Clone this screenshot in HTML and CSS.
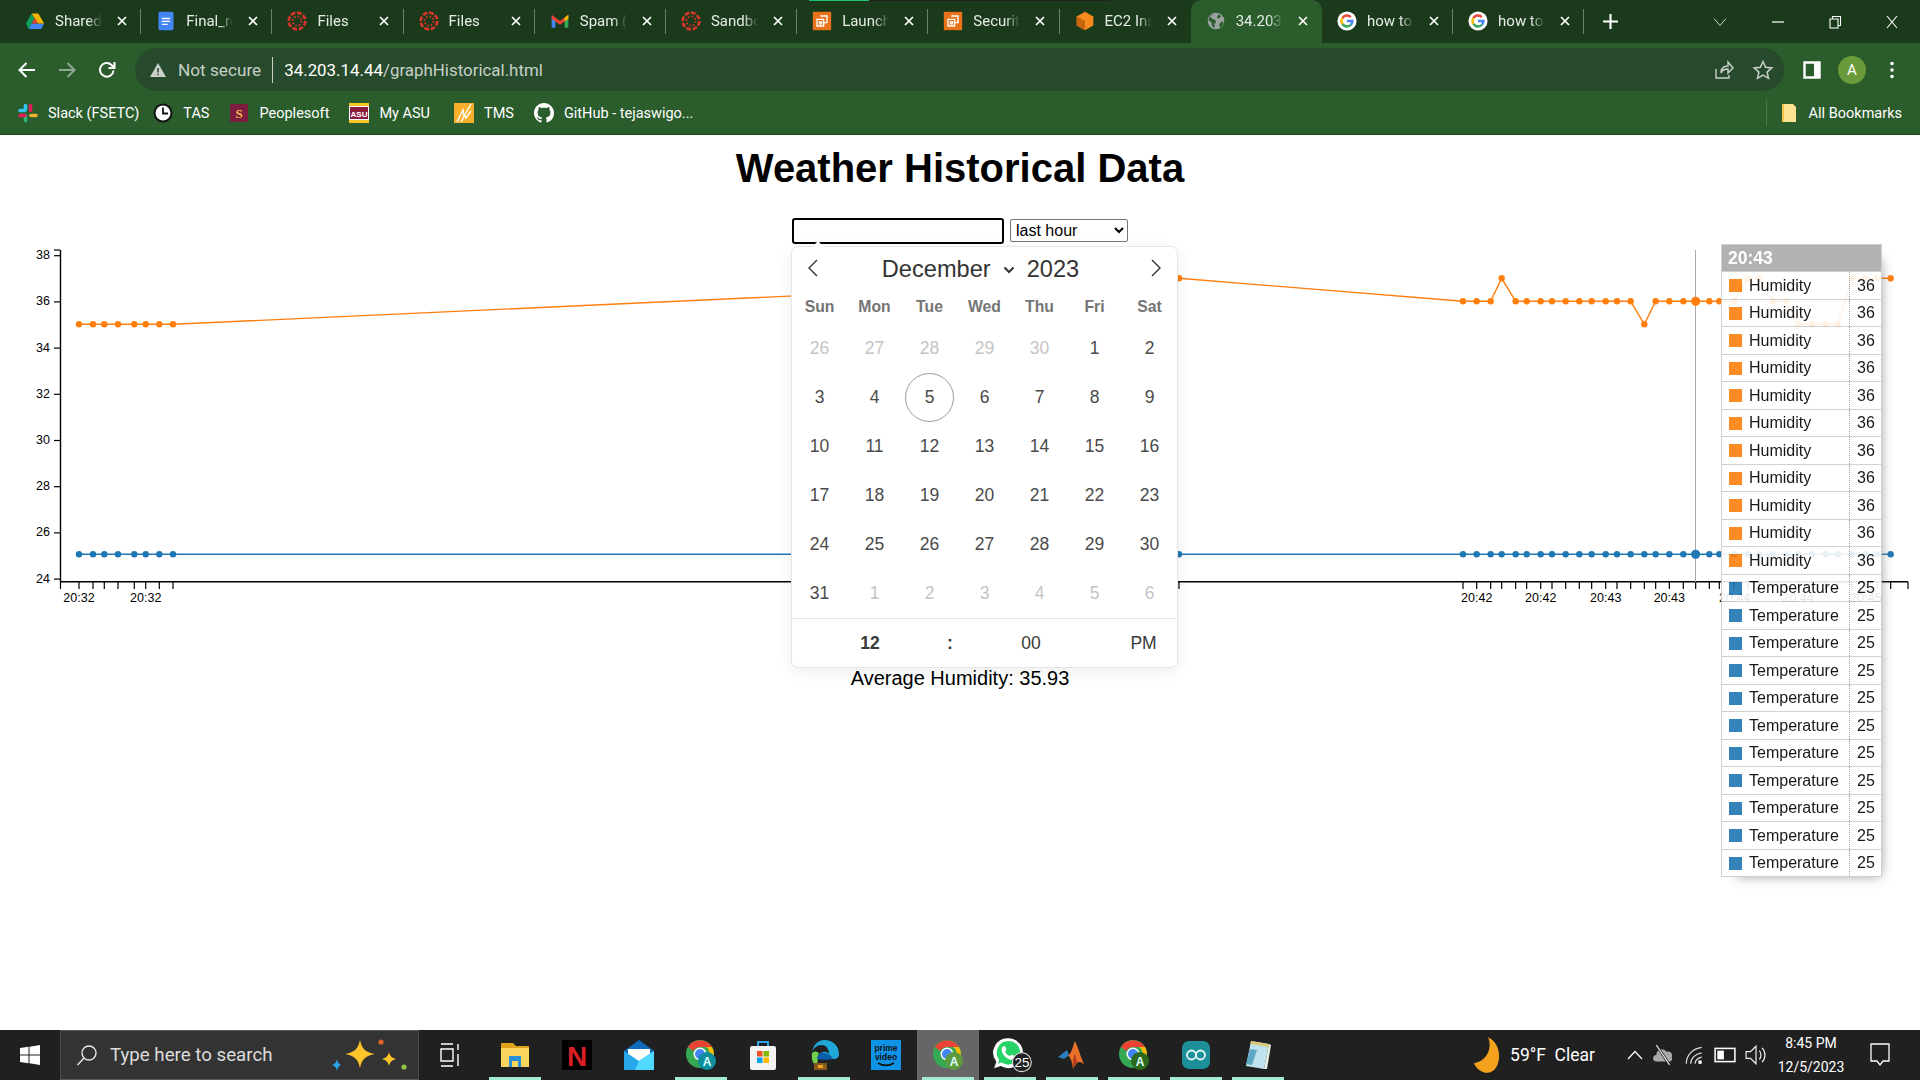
FILE: index.html
```html
<!DOCTYPE html>
<html lang="en">
<head>
  <meta charset="UTF-8">
  <title>Weather Historical Data</title>
  <link rel="stylesheet" href="styles.css">
</head>
<body>

  <svg class="sprite">
    <symbol id="i-drive" viewBox="0 0 24 24">
      <path fill="#0f9d58" d="M8 3 1 15l3.500 6.500L11.500 9z"/>
      <path fill="#4285f4" d="M4.500 21.500h15L23 15H8z"/>
      <path fill="#f4b400" d="M8 3h8l7 12h-7.500z"/>
      <path fill="#db4437" d="M8 15h7.500l-3.700-6.500z"/>
    </symbol>
    <symbol id="i-docs" viewBox="0 0 24 24">
      <rect x="3" y="1" width="18" height="22" rx="2" fill="#4285f4"/>
      <path d="M7 9h10M7 12.500h10M7 16h7" stroke="#fff" stroke-width="1.600"/>
    </symbol>
    <symbol id="i-canvas" viewBox="0 0 24 24">
      <circle cx="12" cy="12" r="10" fill="none" stroke="#d8352a" stroke-width="3.200" stroke-dasharray="5.800 2"/>
      <circle cx="12" cy="12" r="5.500" fill="none" stroke="#d8352a" stroke-width="2.200" stroke-dasharray="2 2.300"/>
    </symbol>
    <symbol id="i-gmail" viewBox="0 0 24 24">
      <path fill="#4285f4" d="M2 6v14h4.500V9.500z"/>
      <path fill="#34a853" d="M22 6v14h-4.500V9.500z"/>
      <path fill="#ea4335" d="M2 4.500 12 12l10-7.500v4.800L12 16.500 2 9.300z"/>
      <path fill="#fbbc04" d="M17.500 8 22 4.500v4.800l-4.500 3.400z"/>
    </symbol>
    <symbol id="i-aws" viewBox="0 0 24 24">
      <rect x="1" y="1" width="22" height="22" fill="#e8731a"/>
      <path d="M10 6h8v8h-4M6 10h8v8H6zM9 13h2.500v2.500H9z" fill="none" stroke="#fff" stroke-width="1.600"/>
    </symbol>
    <symbol id="i-ec2" viewBox="0 0 24 24">
      <path fill="#f58a1f" d="M12 1 22 6.500v11L12 23 2 17.500v-11z"/>
      <path fill="#c9650f" d="M12 23V12L2 6.500v11z"/>
    </symbol>
    <symbol id="i-globe" viewBox="0 0 24 24">
      <circle cx="12" cy="12" r="10" fill="#9aa3a0"/>
      <path fill="#2a5c2c" d="M9 3 5 7l3 3 3 .5 1 3-2 2 .5 5-3-2-1-5L3 11C4 7 6 4 9 3zM15 4l3 2-2 3-3-1zM20 12l1 3-3 5-2-1 .5-4z"/>
    </symbol>
    <symbol id="i-google" viewBox="0 0 24 24">
      <circle cx="12" cy="12" r="11.500" fill="#fff"/>
      <path fill="none" stroke="#ea4335" stroke-width="3" d="M6.500 8.500A6.500 6.500 0 0 1 16.500 7.300"/>
      <path fill="none" stroke="#fbbc04" stroke-width="3" d="M6.500 8.500a6.500 6.500 0 0 0 0 7"/>
      <path fill="none" stroke="#34a853" stroke-width="3" d="M6.500 15.500a6.500 6.500 0 0 0 10.200 1"/>
      <path fill="none" stroke="#4285f4" stroke-width="3" d="M16.700 16.500a6.500 6.500 0 0 0 1.800-4.500H12"/>
    </symbol>
    <symbol id="i-close" viewBox="0 0 12 12">
      <path d="M2 2l8 8M10 2l-8 8" stroke="#fff" stroke-width="1.700" fill="none"/>
    </symbol>
    <symbol id="i-chrome" viewBox="0 0 32 32">
      <circle cx="15" cy="15" r="14" fill="#34a853"/>
      <path fill="#ea4335" d="M3 8a14 14 0 0 1 24 0H15a7 7 0 0 0-6.500 4z"/>
      <path fill="#fbbc04" d="M27 8a14 14 0 0 1-10 20.800L21 20a7 7 0 0 0 0-12z"/>
      <circle cx="15" cy="15" r="6.500" fill="#fff"/>
      <circle cx="15" cy="15" r="5" fill="#4285f4"/>
    </symbol>
  </svg>

  <header class="browser">
    <div class="tabstrip">
      <div class="tab"><svg class="tab-icon"><use href="#i-drive"/></svg><span class="tab-title">Shared drives</span><svg class="tab-x"><use href="#i-close"/></svg></div>
      <div class="tab"><svg class="tab-icon"><use href="#i-docs"/></svg><span class="tab-title">Final_report</span><svg class="tab-x"><use href="#i-close"/></svg></div>
      <div class="tab"><svg class="tab-icon"><use href="#i-canvas"/></svg><span class="tab-title">Files</span><svg class="tab-x"><use href="#i-close"/></svg></div>
      <div class="tab"><svg class="tab-icon"><use href="#i-canvas"/></svg><span class="tab-title">Files</span><svg class="tab-x"><use href="#i-close"/></svg></div>
      <div class="tab"><svg class="tab-icon"><use href="#i-gmail"/></svg><span class="tab-title">Spam (12)</span><svg class="tab-x"><use href="#i-close"/></svg></div>
      <div class="tab"><svg class="tab-icon"><use href="#i-canvas"/></svg><span class="tab-title">Sandbox</span><svg class="tab-x"><use href="#i-close"/></svg></div>
      <div class="tab"><svg class="tab-icon"><use href="#i-aws"/></svg><span class="tab-title">Launch an</span><svg class="tab-x"><use href="#i-close"/></svg></div>
      <div class="tab"><svg class="tab-icon"><use href="#i-aws"/></svg><span class="tab-title">SecurityGroups</span><svg class="tab-x"><use href="#i-close"/></svg></div>
      <div class="tab no-sep"><svg class="tab-icon"><use href="#i-ec2"/></svg><span class="tab-title">EC2 Instance</span><svg class="tab-x"><use href="#i-close"/></svg></div>
      <div class="tab active"><svg class="tab-icon"><use href="#i-globe"/></svg><span class="tab-title">34.203.14.44</span><svg class="tab-x"><use href="#i-close"/></svg></div>
      <div class="tab"><svg class="tab-icon"><use href="#i-google"/></svg><span class="tab-title">how to add</span><svg class="tab-x"><use href="#i-close"/></svg></div>
      <div class="tab"><svg class="tab-icon"><use href="#i-google"/></svg><span class="tab-title">how to add</span><svg class="tab-x"><use href="#i-close"/></svg></div>
      <svg class="new-tab" viewBox="0 0 16 16"><path d="M8 1v14M1 8h14" stroke="#fff" stroke-width="2"/></svg>
      <div class="win-btns">
        <svg class="win-chevron" viewBox="0 0 14 10"><path d="M1 1.500 7 8.500l6-7" fill="none" stroke="#c6d2c6" stroke-width="1"/></svg>
        <div class="win-btn"><svg viewBox="0 0 14 14"><path d="M1 7h12" stroke="#fff" stroke-width="1.200"/></svg></div>
        <div class="win-btn"><svg viewBox="0 0 14 14"><path d="M2 4h8v9H2zM4.500 4V1.500H12.500V10.500H10" fill="none" stroke="#fff" stroke-width="1.100"/></svg></div>
        <div class="win-btn"><svg viewBox="0 0 14 14"><path d="M2 1l10 12M12 1 2 13" stroke="#fff" stroke-width="1.100"/></svg></div>
      </div>
    </div>

    <div class="toolbar">
      <div class="nav-btn"><svg viewBox="0 0 20 20"><path d="M18 10H3M9.500 3 2.500 10l7 7" fill="none" stroke="#fff" stroke-width="2"/></svg></div>
      <div class="nav-btn"><svg viewBox="0 0 20 20"><path d="M2 10h15M10.500 3l7 7-7 7" fill="none" stroke="#8fa892" stroke-width="2"/></svg></div>
      <div class="nav-btn"><svg viewBox="0 0 20 20"><path d="M16.500 10.500A6.800 6.800 0 1 1 14.500 5L17 7.500M17.500 2v6h-6" fill="none" stroke="#fff" stroke-width="2"/></svg></div>
      <div class="omnibox">
        <svg class="warn-icon" viewBox="0 0 18 18"><path d="M9 2 17 16H1z" fill="#c9d1ca"/><path d="M9 7v4.500M9 12.800v1.400" stroke="#274a2c" stroke-width="1.500"/></svg>
        <span class="not-secure">Not secure</span>
        <span class="omni-sep"></span>
        <span class="url"><b>34.203.14.44</b>/graphHistorical.html</span>
        <div class="omni-actions">
          <svg viewBox="0 0 22 22"><path d="M4 10v9h13v-3M9 14c0-5 3-7 7-7V3l5 6-5 5v-4c-3 0-6 1-7 4z" fill="none" stroke="#c9d1ca" stroke-width="1.400"/></svg>
          <svg viewBox="0 0 22 22"><path d="M11 2.500l2.600 5.800 6.200.6-4.700 4.200 1.400 6.200L11 16.100l-5.500 3.200 1.400-6.200L2.200 8.900l6.200-.6z" fill="none" stroke="#c9d1ca" stroke-width="1.500"/></svg>
        </div>
      </div>
      <div class="nav-btn panel-btn"><svg viewBox="0 0 20 20"><path d="M2.500 2.500h15v15h-15z" fill="none" stroke="#fff" stroke-width="2.400"/><path d="M12 3h5v14h-5z" fill="#fff"/></svg></div>
      <div class="nav-btn"><span class="avatar">A</span></div>
      <div class="nav-btn"><svg viewBox="0 0 20 20"><circle cx="10" cy="3.500" r="1.800" fill="#fff"/><circle cx="10" cy="10" r="1.800" fill="#fff"/><circle cx="10" cy="16.500" r="1.800" fill="#fff"/></svg></div>
    </div>

    <div class="bookmarks">
      <div class="bm bm-slack">
        <svg viewBox="0 0 20 20">
          <path d="M2 7.500h5" stroke="#36c5f0" stroke-width="3.600" stroke-linecap="round"/>
          <path d="M12.500 2.500v5" stroke="#e01e5a" stroke-width="3.600" stroke-linecap="round"/>
          <path d="M13 12.500h5" stroke="#ecb22e" stroke-width="3.600" stroke-linecap="round"/>
          <path d="M7.500 12.500v5" stroke="#2eb67d" stroke-width="3.600" stroke-linecap="round"/>
          <path d="M2 12.500h5" stroke="#e01e5a" stroke-width="3.600" stroke-linecap="round"/>
          <path d="M7.500 2.500v3" stroke="#36c5f0" stroke-width="3.600" stroke-linecap="round"/>
        </svg>
        <span>Slack (FSETC)</span>
      </div>
      <div class="bm">
        <svg viewBox="0 0 20 20"><circle cx="10" cy="10" r="8.500" fill="#fff" stroke="#111" stroke-width="2"/><path d="M10 4.500V10.500H15" fill="none" stroke="#111" stroke-width="1.800"/></svg>
        <span>TAS</span>
      </div>
      <div class="bm">
        <svg viewBox="0 0 20 20"><rect x="1" y="1" width="18" height="18" fill="#7c1d3f"/><text x="10" y="15" class="bm-mark">S</text></svg>
        <span>Peoplesoft</span>
      </div>
      <div class="bm bm-myasu">
        <svg viewBox="0 0 20 20"><rect x="0" y="0" width="20" height="20" fill="#fff"/><rect x="0" y="0" width="20" height="3" fill="#ffc627"/><rect x="0" y="17" width="20" height="3" fill="#ffc627"/><rect x="1" y="4" width="18" height="12" fill="#8c1d40"/><text x="10" y="14" class="bm-asu">ASU</text></svg>
        <span>My ASU</span>
      </div>
      <div class="bm">
        <svg viewBox="0 0 20 20"><rect x="0" y="0" width="20" height="20" fill="#f6b02c"/><path d="M3 19 9 7l1 6L17 1M7 19l4-7 1 3 5-7" fill="none" stroke="#fff" stroke-width="1.400"/></svg>
        <span>TMS</span>
      </div>
      <div class="bm">
        <svg viewBox="0 0 16 16"><path fill="#fff" d="M8 0C3.580 0 0 3.580 0 8c0 3.540 2.290 6.530 5.470 7.590.4.070.55-.17.55-.38 0-.19-.01-.82-.01-1.490-2.010.37-2.530-.49-2.690-.94-.09-.23-.48-.94-.82-1.130-.28-.15-.68-.52-.01-.53.63-.01 1.080.58 1.230.82.72 1.210 1.870.87 2.330.66.07-.52.28-.87.51-1.070-1.780-.2-3.640-.89-3.640-3.950 0-.87.31-1.590.82-2.150-.08-.2-.36-1.020.08-2.120 0 0 .67-.21 2.200.82.64-.18 1.320-.27 2-.27.68 0 1.360.09 2 .27 1.530-1.040 2.200-.82 2.200-.82.44 1.100.16 1.920.08 2.120.51.56.82 1.270.82 2.150 0 3.070-1.870 3.750-3.650 3.950.29.25.54.73.54 1.480 0 1.070-.01 1.930-.01 2.200 0 .21.15.46.55.38A8.013 8.013 0 0016 8c0-4.420-3.580-8-8-8z"/></svg>
        <span>GitHub - tejaswigo...</span>
      </div>
      <div class="bm all-bm">
        <svg viewBox="0 0 20 20"><path d="M3 1h11l3 3v15H3z" fill="#fde293"/><path d="M3 1h2v18H3z" fill="#f0c649"/></svg>
        <span>All Bookmarks</span>
      </div>
    </div>
  </header>

  <main class="page">
    <h1>Weather Historical Data</h1>

    <div class="controls">
      <input type="text" class="date-input">
      <select class="range">
        <option>last hour</option>
      </select>
    </div>

    <svg id="chart" class="chart" viewBox="0 248 1920 360"></svg>

    <p class="average">Average Humidity: 35.93</p>

    <div class="calendar">
      <div class="cal-head">
        <svg class="cal-arrow" viewBox="0 0 12 20"><path d="M10 2 2 10l8 8" fill="none" stroke="#333" stroke-width="1.400"/></svg>
        <div class="cal-month">
          <span>December</span>
          <svg class="cal-chevron" viewBox="0 0 12 8"><path d="M1.500 1.500 6 6l4.500-4.500" fill="none" stroke="#333" stroke-width="2"/></svg>
          <span>2023</span>
        </div>
        <svg class="cal-arrow" viewBox="0 0 12 20"><path d="M2 2l8 8-8 8" fill="none" stroke="#333" stroke-width="1.400"/></svg>
      </div>
      <div class="cal-weekdays">
        <span>Sun</span><span>Mon</span><span>Tue</span><span>Wed</span><span>Thu</span><span>Fri</span><span>Sat</span>
      </div>
      <div class="cal-days">
        <span class="other">26</span><span class="other">27</span><span class="other">28</span><span class="other">29</span><span class="other">30</span><span>1</span><span>2</span>
        <span>3</span><span>4</span><span class="today">5</span><span>6</span><span>7</span><span>8</span><span>9</span>
        <span>10</span><span>11</span><span>12</span><span>13</span><span>14</span><span>15</span><span>16</span>
        <span>17</span><span>18</span><span>19</span><span>20</span><span>21</span><span>22</span><span>23</span>
        <span>24</span><span>25</span><span>26</span><span>27</span><span>28</span><span>29</span><span>30</span>
        <span>31</span><span class="other">1</span><span class="other">2</span><span class="other">3</span><span class="other">4</span><span class="other">5</span><span class="other">6</span>
      </div>
      <div class="cal-time">
        <b>12</b><b>:</b><span>00</span><span>PM</span>
      </div>
    </div>

    <div id="tooltip" class="tooltip">
      <div class="tip-head">20:43</div>
    </div>
  </main>

  <footer class="taskbar">
    <div class="start">
      <svg viewBox="0 0 20 20"><path fill="#fff" d="M0 3l8.500-1.200V9.500H0zM9.500 1.700 20 0v9.500H9.500zM0 10.500h8.500v7.700L0 17zM9.500 10.500H20V20L9.500 18.300z"/></svg>
    </div>
    <div class="search">
      <svg class="search-icon" viewBox="0 0 22 22"><circle cx="13" cy="9" r="7" fill="none" stroke="#e6e6e6" stroke-width="1.400"/><path d="M8 14 1.500 21" stroke="#e6e6e6" stroke-width="1.400"/></svg>
      <span>Type here to search</span>
      <svg class="sparkles" viewBox="0 0 78 50">
        <path fill="#fdc42c" d="M30 10c2 9 5 12 15 14-10 2-13 5-15 14-2-9-5-12-15-14 10-2 13-5 15-14z"/>
        <path fill="#fdc42c" d="M59 22c1 4 3 6 7 7-4 1-6 3-7 7-1-4-3-6-7-7 4-1 6-3 7-7z"/>
        <path fill="#2aa6e8" d="M7 29c.5 3 1.500 5 4 6-2.500 1-3.500 3-4 6-.5-3-1.500-5-5-6 3.500-1 4.500-3 5-6z"/>
        <circle cx="51" cy="12" r="2.600" fill="#e2622c"/>
        <circle cx="74" cy="37" r="2.600" fill="#8dc63f"/>
      </svg>
    </div>
    <div class="task-view">
      <svg viewBox="0 0 20 24"><path d="M1 1h12M1 6h12v12H1zM1 23h12M18 1v6M18 11v12" fill="none" stroke="#fff" stroke-width="1.400"/></svg>
    </div>
    <div class="apps">
      <div class="app open">
        <svg viewBox="0 0 32 32"><path fill="#e0a21b" d="M2 4h12l3 3h13v6H2z"/><path fill="#fbd65c" d="M2 9h28v19H2z"/><path fill="#2a8fd8" d="M10 17h12v11h-3v-6h-6v6h-3z"/></svg>
      </div>
      <div class="app">
        <svg viewBox="0 0 32 32"><rect x="1" y="1" width="30" height="30" fill="#000"/><text x="16" y="27" class="netflix">N</text></svg>
      </div>
      <div class="app">
        <svg viewBox="0 0 32 32"><path fill="#0f6cbd" d="M16 1 31 12v18H1V12z"/><path fill="#fff" d="M5 10h22v6l-11 7-11-7z"/><path fill="#28a8ea" d="M1 12l15 10 15-10v19H1z"/><path fill="#50d9ff" d="M16 22l15-10v19H12z"/></svg>
      </div>
      <div class="app open">
        <svg viewBox="0 0 32 32"><use href="#i-chrome"/><circle cx="22" cy="22" r="9" fill="#0e8fa0"/><text x="22" y="26.500" class="prof">A</text></svg>
      </div>
      <div class="app">
        <svg viewBox="0 0 32 32"><path d="M11 8V3h10v5" fill="none" stroke="#2aa6e8" stroke-width="2"/><rect x="3" y="7" width="26" height="24" rx="2" fill="#f3f3f3"/><rect x="10" y="12" width="5.500" height="5.500" fill="#f25022"/><rect x="16.500" y="12" width="5.500" height="5.500" fill="#7fba00"/><rect x="10" y="18.500" width="5.500" height="5.500" fill="#00a4ef"/><rect x="16.500" y="18.500" width="5.500" height="5.500" fill="#ffb900"/></svg>
      </div>
      <div class="app open">
        <svg viewBox="0 0 32 32"><path fill="#1fa8d8" d="M16 1c9 0 15 6 15 14 0 3-2 5-6 5H9c2-8 9-9 12-5 0-5-3-9-7-9-5 0-9 3-10 8C5 6 10 1 16 1z"/><path fill="#6fd14a" d="M4 14c-1 6 1 11 5 14l1-9c0-2 0-3 1-5-3-2-5-2-7 0z"/><path fill="#0a5da8" d="M9 20c0-4 4-7 8-6 5 1 7 4 8 6-4 1-12 1-16 0z"/><rect x="6" y="24" width="13" height="7" fill="#8a5a1c"/><rect x="10" y="26" width="5" height="3" fill="#f5a623"/></svg>
      </div>
      <div class="app">
        <svg viewBox="0 0 32 32"><rect x="1" y="1" width="30" height="30" fill="#0f93e6"/><text x="16" y="12" class="prime">prime</text><text x="16" y="21" class="prime">video</text><path d="M8 24c5 3 11 3 16 0" fill="none" stroke="#111" stroke-width="1.800"/></svg>
      </div>
      <div class="app open current">
        <svg viewBox="0 0 32 32"><use href="#i-chrome"/><circle cx="22" cy="22" r="9" fill="#5c9a3c"/><text x="22" y="26.500" class="prof">A</text></svg>
      </div>
      <div class="app open">
        <svg class="wide" viewBox="0 0 36 32"><path fill="#fff" d="M14 1a13 13 0 0 1 12 18A13 13 0 0 1 7 26l-6 2 2-6A13 13 0 0 1 14 1z"/><path fill="#25d366" d="M14 3.500a10.500 10.500 0 0 1 0 21c-2 0-4-.5-6-1.800l-3.500 1 1-3.400A10.500 10.500 0 0 1 14 3.500z"/><path fill="#fff" d="M10 8c1 0 2 2.500 2 3 0 1-1 1.500-1 2 .8 2 2.200 3 4 4 .5 0 1-1.200 1.800-1.200s3 1.200 3 2c0 2-2.500 2.800-4 2.500-4-1-8-5-8-9 0-1.500 1-3.300 2.200-3.300z"/><circle cx="26" cy="22.500" r="8.500" fill="#222" stroke="#ddd" stroke-width="1"/><text x="26" y="27" class="wa-count">25</text></svg>
      </div>
      <div class="app open">
        <svg viewBox="0 0 32 32"><path fill="#e9702a" d="M19 2c3 6 6 17 9 23-3-2-5-3-7-1-1 1-3 4-4 6-1-8-2-10-5-14 3 0 5-9 7-14z"/><path fill="#2a7fbc" d="M2 18l9-7c1 2 2 4 1 6l-4 3z"/><path fill="#b83a1a" d="M17 30c0-7 0-12 2-16l2 10c-2 1-3 3-4 6z"/></svg>
      </div>
      <div class="app open">
        <svg viewBox="0 0 32 32"><use href="#i-chrome"/><circle cx="22" cy="22" r="9" fill="#2c6a1e"/><text x="22" y="26.500" class="prof">A</text></svg>
      </div>
      <div class="app open">
        <svg viewBox="0 0 32 32"><rect x="2" y="2" width="28" height="28" rx="7" fill="#1d8f98"/><circle cx="11.500" cy="16" r="4.500" fill="none" stroke="#e6f7f7" stroke-width="1.800"/><circle cx="20.500" cy="16" r="4.500" fill="none" stroke="#e6f7f7" stroke-width="1.800"/></svg>
      </div>
      <div class="app open">
        <svg viewBox="0 0 32 32"><path fill="#bfe3ec" d="M9 2l18 3-5 25L4 27z"/><path fill="#5fa8c4" d="M8 10l7 1-5 15-6-1z"/><path fill="#e8f1e4" d="M22 30l5-25 2 1-4 24z"/><path fill="#d9c77a" d="M9 2l18 3-.6 3L8.300 5z"/></svg>
      </div>
    </div>
    <div class="tray">
      <svg class="moon" viewBox="0 0 30 40"><path fill="#f4a11e" d="M17 1c4 7 3 24-15 28 3 6 9 10 14 10 8 0 13-8 13-18S24 4 17 1z"/></svg>
      <span class="weather">59°F&nbsp; Clear</span>
      <svg class="tray-chev" viewBox="0 0 16 10"><path d="M1 9l7-7.500L15 9" fill="none" stroke="#fff" stroke-width="1.200"/></svg>
      <svg class="tray-icon" viewBox="0 0 20 20"><path fill="#a9a9a9" d="M4 16c-4 0-4-6 0-6 0-5 6-7 9-3 4-1 6 2 5 5 1 3-1 4-3 4z"/><path d="M4 1l12 18" stroke="#222" stroke-width="2.400"/><path d="M4 1l12 18" stroke="#eee" stroke-width="1"/></svg>
      <svg class="tray-icon" viewBox="0 0 20 20"><path d="M3 18C3 10 9 4 17 3M7 18c0-5 4-9 10-10M11 18c0-3 2-5 6-6" fill="none" stroke="#ddd" stroke-width="1.100"/><rect x="14" y="15" width="3" height="3" fill="#fff"/></svg>
      <svg class="tray-icon" viewBox="0 0 20 20"><rect x="1" y="4" width="18" height="12" fill="none" stroke="#fff" stroke-width="1.400"/><rect x="3" y="6" width="6" height="8" fill="#fff"/></svg>
      <svg class="tray-icon" viewBox="0 0 20 20"><path d="M1 7h4l5-5v16l-5-5H1zM13 6c2 2 2 6 0 8M15.500 3.500c3.500 3.500 3.500 9.500 0 13" fill="none" stroke="#eee" stroke-width="1.100"/></svg>
      <div class="clock"><span>8:45 PM</span><span>12/5/2023</span></div>
      <svg class="notif" viewBox="0 0 20 24"><path d="M1 1h18v17h-6l-3 4-3-4H1z" fill="none" stroke="#fff" stroke-width="1.300"/></svg>
    </div>
  </footer>

  <script src="chart.js"></script>
</body>
</html>
```

FILE: styles.css
```css
* {
  box-sizing: border-box;
}

body {
  margin: 0;
  height: 1080px;
  overflow: hidden;
  display: flex;
  flex-direction: column;
  background: #fff;
  font-family: "Liberation Sans", Arial, sans-serif;
}

.sprite {
  display: none;
}

/* browser chrome */

.browser {
  font-family: Roboto, "Noto Sans", sans-serif;
  color: #fff;
}

.tabstrip {
  position: relative;
  height: 43px;
  background: #1b3a1c;
  display: flex;
  align-items: center;
  padding-left: 10px;
}

/* sliver of the window behind, along the top edge */
.tabstrip::before {
  content: "";
  position: absolute;
  left: 809px;
  top: 0;
  width: 301px;
  height: 1px;
  background: linear-gradient(90deg, #1bc46b 60px, #222 60px);
}

.tab {
  position: relative;
  width: 131.200px;
  height: 43px;
  flex: none;
  display: flex;
  align-items: center;
  padding: 0 0 1px 15px;
  font-size: 15px;
  color: #e6ece6;
}

.tab::after {
  content: "";
  position: absolute;
  right: 0;
  top: 9px;
  height: 25px;
  width: 1px;
  background: #6a806b;
}

.tab.no-sep::after,
.tab.active::after {
  display: none;
}

.tab.active {
  background: #2a5c2c;
  border-radius: 10px 10px 0 0;
}

.tab-icon {
  width: 20px;
  height: 20px;
  flex: none;
}

.tab-title {
  width: 47px;
  margin-left: 10px;
  white-space: nowrap;
  overflow: hidden;
  -webkit-mask-image: linear-gradient(90deg, #000 70%, transparent);
  mask-image: linear-gradient(90deg, #000 70%, transparent);
}

.tab-x {
  width: 12px;
  height: 12px;
  margin-left: 14px;
  flex: none;
}

.new-tab {
  width: 17px;
  height: 17px;
  margin-left: 18px;
}

.win-btns {
  margin-left: auto;
  display: flex;
  align-items: center;
}

.win-chevron {
  width: 14px;
  height: 10px;
  margin-right: 22px;
}

.win-btn {
  width: 57px;
  display: flex;
  justify-content: center;
}

.win-btn svg {
  width: 14px;
  height: 14px;
}

.win-btn:nth-child(3) svg {
  height: 18px;
}

.win-btn:nth-child(4) svg {
  height: 18px;
}

.toolbar {
  height: 49px;
  padding: 4px 0 0 7px;
  background: #2a5c2c;
  display: flex;
  align-items: center;
}

.nav-btn {
  width: 40px;
  height: 40px;
  flex: none;
  display: flex;
  align-items: center;
  justify-content: center;
}

.nav-btn svg {
  width: 20px;
  height: 20px;
}

.omnibox {
  width: 1649px;
  height: 43px;
  margin: 0 8px 0 8px;
  padding: 0 9px 0 14px;
  border-radius: 22px;
  background: #274a2c;
  display: flex;
  align-items: center;
  font-size: 17.200px;
  color: #c6d0c7;
}

.warn-icon {
  width: 18px;
  height: 18px;
}

.not-secure {
  margin-left: 11px;
}

.omni-sep {
  width: 1px;
  height: 26px;
  margin: 0 11px;
  background: #c6d0c7;
}

.url {
  font-size: 16.900px;
}

.url b {
  font-weight: 400;
  color: #fff;
}

.omni-actions {
  margin-left: auto;
  display: flex;
  align-items: center;
  gap: 18px;
  padding-right: 1px;
}

.omni-actions svg {
  width: 22px;
  height: 22px;
}

.avatar {
  width: 28px;
  height: 28px;
  border-radius: 50%;
  background: #6a9a3a;
  color: #fff;
  font-size: 15px;
  display: flex;
  align-items: center;
  justify-content: center;
}

.bookmarks {
  height: 43px;
  padding-left: 18px;
  background: #2a5c2c;
  border-bottom: 1px solid #214a23;
  display: flex;
  align-items: center;
  gap: 20px;
  font-size: 14.500px;
}

.bm {
  display: flex;
  align-items: center;
  gap: 10px;
  white-space: nowrap;
}

.bm-slack {
  margin-right: -6px;
}

.bm-myasu {
  margin-right: 4px;
}

.bm svg {
  width: 20px;
  height: 20px;
  flex: none;
}

.all-bm {
  margin-left: auto;
  margin-right: 18px;
  height: 26px;
  padding-left: 12px;
  border-left: 1px solid #4f7851;
}

.bm-mark {
  font: bold 13px "Liberation Serif", serif;
  fill: #f1c14a;
  text-anchor: middle;
}

.bm-asu {
  font: bold 8px "Liberation Sans", sans-serif;
  fill: #fff;
  text-anchor: middle;
}

/* page */

.page {
  position: relative;
  flex: 1;
  min-height: 0;
}

h1 {
  margin: 10px 0 0;
  font-size: 40px;
  line-height: 46px;
  text-align: center;
  color: #000;
}

.controls {
  margin-top: 27px;
  height: 26px;
  display: flex;
  align-items: flex-start;
  justify-content: center;
  gap: 6px;
}

.date-input {
  width: 212px;
  height: 26px;
  border: 2px solid #000;
  border-radius: 3px;
  outline: none;
}

.range {
  width: 118px;
  height: 23px;
  margin-top: 1px;
  padding: 0 0 0 1px;
  font: 16px "Liberation Sans", Arial, sans-serif;
  color: #000;
  background: #fff;
  border: 1px solid #767676;
  border-radius: 2px;
}

.chart {
  display: block;
  width: 1920px;
  height: 360px;
  margin-top: 4px;
}

.chart text {
  font-size: 12.500px;
  fill: #000;
}

.average {
  margin: 59px 0 0;
  font-size: 20px;
  line-height: 23px;
  text-align: center;
  color: #000;
}

/* date picker dropdown */

.calendar {
  position: absolute;
  left: 792px;
  top: 112px;
  width: 385px;
  height: 420px;
  background: #fff;
  border-radius: 6px;
  color: #393939;
  box-shadow: 1px 0 0 #e6e6e6, -1px 0 0 #e6e6e6, 0 1px 0 #e6e6e6, 0 -1px 0 #e6e6e6, 0 4px 16px rgba(0, 0, 0, 0.08);
}

.calendar::before {
  content: "";
  position: absolute;
  left: 20px;
  top: -6px;
  width: 12px;
  height: 12px;
  background: #fff;
  clip-path: polygon(50% 0, 100% 50%, 0 50%);
}

.cal-head {
  height: 43px;
  display: flex;
  align-items: center;
  justify-content: space-between;
  padding: 0 15px;
}

.cal-arrow {
  width: 12px;
  height: 20px;
  margin-bottom: 1px;
}

.cal-month {
  display: flex;
  align-items: center;
  padding-top: 1px;
  font-size: 23.600px;
  color: #333;
  margin-right: 8px;
}

.cal-chevron {
  width: 12px;
  height: 8px;
  margin: 2px 12px 0 12px;
}

.cal-weekdays {
  height: 34px;
  display: grid;
  grid-template-columns: repeat(7, 55px);
  align-items: center;
  justify-items: center;
  font-size: 15.750px;
  font-weight: bold;
  color: #757575;
}

.cal-days {
  display: grid;
  grid-template-columns: repeat(7, 55px);
  grid-auto-rows: 49px;
  font-size: 17.500px;
  color: #4a4a4a;
  border-bottom: 1px solid #e6e6e6;
}

.cal-days span {
  display: flex;
  align-items: center;
  justify-content: center;
}

.cal-days .other {
  color: #c4c4c4;
}

.cal-days .today {
  width: 49px;
  height: 49px;
  justify-self: center;
  border: 1px solid #959ea9;
  border-radius: 50%;
}

.cal-time {
  height: 48px;
  display: grid;
  grid-template-columns: 156px 4px 158px 67px;
  align-items: center;
  justify-items: center;
  font-size: 17.500px;
}

/* chart tooltip */

.tooltip {
  position: absolute;
  left: 1721px;
  top: 109px;
  width: 161px;
  opacity: 0.9;
  background: #fff;
  border: 1px solid #ccc;
  box-shadow: 7px 7px 12px -9px #777;
  font-size: 16px;
  color: #000;
}

.tip-head {
  height: 26px;
  padding-left: 6px;
  background: #aaa;
  color: #fff;
  font-size: 17.500px;
  font-weight: bold;
  line-height: 26px;
}

.tip-row {
  height: 27.500px;
  display: flex;
  align-items: center;
  border-top: 1px solid #ccc;
}

.tip-name {
  width: 127px;
  height: 100%;
  display: flex;
  align-items: center;
  padding: 1px 0 0 7px;
}

.tip-swatch {
  width: 13px;
  height: 13px;
  margin-right: 7px;
}

.tip-value {
  flex: 1;
  height: 100%;
  display: flex;
  align-items: center;
  padding: 1px 0 0 7px;
  border-left: 1px dotted #999;
}

/* windows taskbar */

.taskbar {
  height: 50px;
  flex: none;
  background: #202020;
  display: flex;
  color: #fff;
  font-family: Roboto, "Noto Sans", sans-serif;
}

.start {
  width: 60px;
  display: flex;
  align-items: center;
  justify-content: center;
}

.start svg {
  width: 20px;
  height: 20px;
}

.search {
  width: 359px;
  display: flex;
  align-items: center;
  background: #333;
  border-top: 1px solid #575757;
  border-bottom: 1px solid #575757;
  border-left: 1px solid #4a4a4a;
  border-right: 1px solid #4a4a4a;
  font-size: 18.700px;
  color: #dcdcdc;
  padding-left: 15px;
}

.search-icon {
  width: 22px;
  height: 22px;
  margin-right: 12px;
}

.sparkles {
  width: 78px;
  height: 50px;
  margin-left: auto;
  margin-right: 10px;
}

.task-view {
  width: 62px;
  display: flex;
  align-items: center;
  justify-content: center;
}

.task-view svg {
  width: 20px;
  height: 24px;
}

.apps {
  display: flex;
  margin-left: 3px;
}

.app {
  position: relative;
  width: 61.900px;
  display: flex;
  align-items: center;
  justify-content: center;
}

.app svg {
  width: 32px;
  height: 32px;
}

.app svg.wide {
  width: 40px;
  height: 36px;
  margin-left: 6px;
}

.app.open::after {
  content: "";
  position: absolute;
  left: 5px;
  right: 5px;
  bottom: 0;
  height: 3px;
  background: #a4ecd0;
}

.app.current {
  background: #666;
}

.netflix {
  font: bold 28px "Liberation Sans", sans-serif;
  fill: #d81f26;
  text-anchor: middle;
}

.prof {
  font: bold 12px "Liberation Sans", sans-serif;
  fill: #dff;
  text-anchor: middle;
}

.prime {
  font: bold 8.500px "Liberation Sans", sans-serif;
  fill: #111;
  text-anchor: middle;
}

.wa-count {
  font: 12px "Liberation Sans", sans-serif;
  fill: #fff;
  text-anchor: middle;
}

.tray {
  margin-left: auto;
  display: flex;
  align-items: center;
  padding-right: 30px;
}

.moon {
  width: 28px;
  height: 38px;
}

.weather {
  margin-left: 10px;
  font-size: 17.500px;
}

.tray-chev {
  width: 16px;
  height: 10px;
  margin-left: 32px;
}

.tray-icon {
  width: 22px;
  height: 22px;
  margin-left: 9px;
}

.clock {
  width: 72px;
  margin-left: 8px;
  margin-right: 1px;
  display: flex;
  flex-direction: column;
  align-items: center;
  gap: 5px;
  font-size: 14px;
  line-height: 19px;
}

.notif {
  width: 20px;
  height: 24px;
  margin-left: 22px;
}
```

FILE: chart.js
```js
// temp / humidity history, x values are pixel positions on the time axis
const svgNS = 'http://www.w3.org/2000/svg';
const chart = document.getElementById('chart');

const ORANGE = '#ff7f0e';
const BLUE = '#1f77b4';

const left = [79, 93, 104.3, 118, 134.3, 145.7, 159.3, 173];
const right = [
  [69, 36], [110, 36], [152, 36], [185, 37], [227, 36], [260, 36], [302, 36], [336, 36],
  [377, 36], [418, 36], [455, 36], [497, 36], [531, 36], [572, 36], [613, 35], [647, 36],
  [688, 36], [730, 36], [767, 36], [808, 36], [838, 36], [882, 36], [923, 37], [958, 37],
  [999, 36], [1040, 36], [1075, 35], [1116, 35], [1157, 35], [1194, 35], [1236, 37],
  [1277, 37], [1311, 37], [1352, 37]
];

const points = [];
left.forEach(x => points.push({ x: x, hum: 35 }));
points.push({ x: 1179, hum: 37 });
right.forEach(p => points.push({ x: 1440 + p[0] / 3, hum: p[1] }));

function y(v) {
  return 554.3 - (v - 25) * 23;
}

function add(tag, attrs, text) {
  const el = document.createElementNS(svgNS, tag);
  for (const k in attrs) el.setAttribute(k, attrs[k]);
  if (text) el.textContent = text;
  chart.appendChild(el);
  return el;
}

function line(x1, y1, x2, y2, color, width) {
  add('line', { x1: x1, y1: y1, x2: x2, y2: y2, stroke: color, 'stroke-width': width });
}

// axes
line(60.5, 250, 60.5, 582, '#000', 1.4);
line(54, 250, 60, 250, '#000', 1.2);
line(60, 581.7, 1908, 581.7, '#000', 1.4);
line(60.5, 581.7, 60.5, 589, '#000', 1.2);
line(1908, 581.7, 1908, 589, '#000', 1.2);

for (let i = 0; i < 8; i++) {
  const ty = 255.7 + i * 46.2;
  line(54, ty, 60, ty, '#000', 1.2);
  add('text', { x: 50, y: ty + 3.5, 'text-anchor': 'end' }, String(38 - i * 2));
}

points.forEach(p => line(p.x, 582, p.x, 589, '#000', 1.2));

const labels = [
  [79, '20:32'], [145.7, '20:32'], [1476.7, '20:42'], [1540.7, '20:42'],
  [1605.7, '20:43'], [1669.3, '20:43'], [1734.7, '20:44'], [1798, '20:44'], [1865.7, '20:45']
];
labels.forEach(l => add('text', { x: l[0], y: 601.5, 'text-anchor': 'middle' }, l[1]));

// focus line on the hovered time
line(1695.5, 250, 1695.5, 582, '#aaa', 1);

// series
function series(color, value) {
  add('polyline', {
    points: points.map(p => p.x + ',' + y(value(p))).join(' '),
    fill: 'none',
    stroke: color,
    'stroke-width': 1.4
  });
  points.forEach(p => {
    const hovered = Math.abs(p.x - 1695.7) < 0.5;
    add('circle', { cx: p.x, cy: y(value(p)), r: hovered ? 4.6 : 3.2, fill: color });
  });
}
series(ORANGE, p => p.hum);
series(BLUE, () => 25);

// tooltip rows
const tooltip = document.getElementById('tooltip');

function addRow(name, value, color) {
  const row = document.createElement('div');
  row.className = 'tip-row';
  row.innerHTML = '<div class="tip-name"><span class="tip-swatch" style="background:' + color + '"></span>' +
    name + '</div><div class="tip-value">' + value + '</div>';
  tooltip.appendChild(row);
}

for (let i = 0; i < 11; i++) addRow('Humidity', 36, ORANGE);
for (let i = 0; i < 11; i++) addRow('Temperature', 25, BLUE);
```
